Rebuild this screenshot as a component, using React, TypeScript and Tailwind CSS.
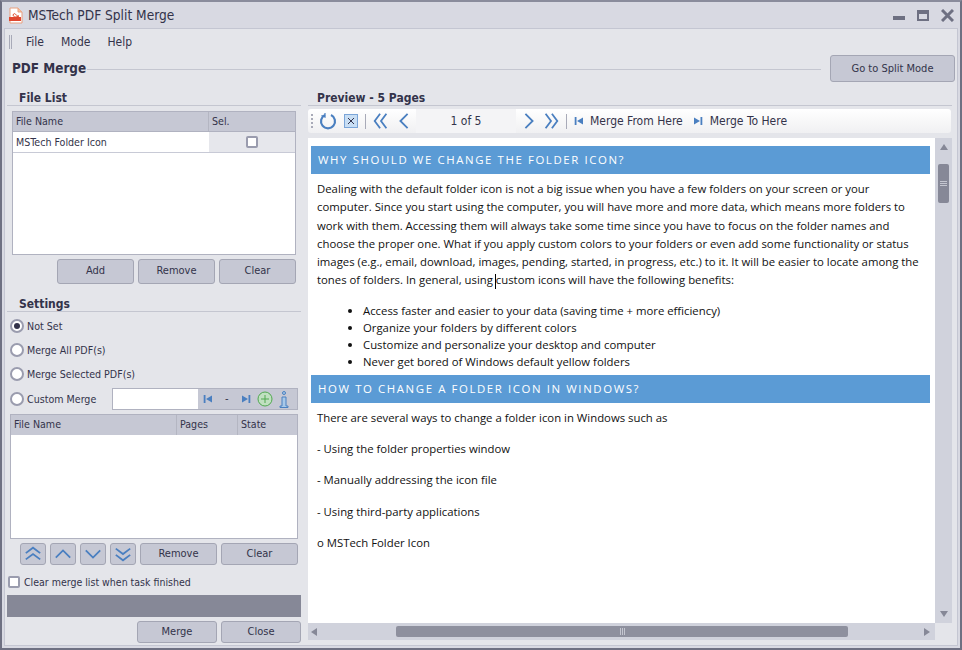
import React from "react";

const UI = "font-['DejaVu_Sans',sans-serif] [font-stretch:condensed]";
const btn = "flex shrink-0 items-center justify-center rounded-[3px] border border-[#a4a6b4] bg-[#c6c8d4] text-[11px] text-[#33334a]";

function Section({ title, pad }: { title: string; pad: string }) {
  return (
    <div className={"h-[19px] shrink-0 border-b border-[#c4c6d0] pt-[3px] text-[12px] font-bold leading-[16px] text-[#33334a] " + pad}>
      {title}
    </div>
  );
}

function Radio({ label, checked, className }: { label: string; checked?: boolean; className?: string }) {
  return (
    <div className={"flex h-[14px] shrink-0 items-center gap-[3px] pl-[3px] " + (className ?? "")}>
      <span className="flex h-[14px] w-[14px] items-center justify-center rounded-full border-2 border-[#9a9cae] bg-white">
        {checked && <span className="h-[6px] w-[6px] rounded-full bg-[#33334a]" />}
      </span>
      <span className="h-[14px] text-[10.6px] leading-[15px] text-[#33334a]">{label}</span>
    </div>
  );
}

function Chev({ dir, size = 20, color = "#4a7fc0", double }: { dir: "l" | "r" | "u" | "d"; size?: number; color?: string; double?: boolean }) {
  const rot = { l: 0, r: 180, u: 90, d: 270 }[dir];
  return (
    <svg width={size} height={size} viewBox="0 0 20 20" fill="none" stroke={color} strokeWidth="2">
      <g transform={`rotate(${rot} 10 10)`}>
        {double ? (
          <>
            <path d="M9 2 L3 10 L9 18" />
            <path d="M16 2 L10 10 L16 18" />
          </>
        ) : (
          <path d="M14 2 L6 10 L14 18" />
        )}
      </g>
    </svg>
  );
}

function SkipIcon({ end }: { end?: boolean }) {
  return (
    <svg width="10" height="10" viewBox="0 0 10 10" fill="#4a7fc0">
      {end ? (
        <>
          <path d="M1 1.5 L7 5 L1 8.5 Z" />
          <rect x="7.5" y="1" width="1.8" height="8" />
        </>
      ) : (
        <>
          <path d="M9 1.5 L3 5 L9 8.5 Z" />
          <rect x="0.7" y="1" width="1.8" height="8" />
        </>
      )}
    </svg>
  );
}

function ArrowBtn({ children }: { children: React.ReactNode }) {
  return <div className={btn + " h-[22px] w-[26px]"}>{children}</div>;
}

function Heading({ children }: { children: string }) {
  return (
    <div className="flex h-[28px] items-center bg-[#5b9bd5] pl-[7px] text-[11.4px] tracking-[1.6px] text-white">{children}</div>
  );
}

export default function App() {
  return (
    <div className={"flex h-[650px] w-[962px] flex-col overflow-hidden border-2 border-[#6e7082] border-t-[#8a8c9c] bg-[#d8d9e2] " + UI}>
      {/* Title bar */}
      <div className="flex h-[26px] shrink-0 items-center pl-[7px] pr-[5px]">
        <svg width="14" height="17" viewBox="0 0 14 17" className="mr-[5px]">
          <path d="M1 1 H9 L13 5 V16 H1 Z" fill="#fff" stroke="#e8a080" />
          <path d="M9 1 V5 H13" fill="#f4c0a0" stroke="#e8a080" />
          <path d="M4 8 C6 4 7 10 10 9 C7 10 5 11 4 8Z" fill="none" stroke="#e05030" />
          <rect x="0" y="10" width="12" height="4" fill="#e04830" />
        </svg>
        <span className="text-[13.6px] text-[#33334a]">MSTech PDF Split Merge</span>
        <div className="ml-auto flex items-center gap-[12px] pr-[1px]">
          <span className="mt-[5px] h-[4px] w-[12px] bg-[#6e7082]" />
          <span className="h-[11px] w-[12px] border-2 border-t-[4px] border-[#6e7082]" />
          <svg width="13" height="13" viewBox="0 0 13 13" stroke="#6e7082" strokeWidth="3">
            <path d="M1 1 L12 12 M12 1 L1 12" />
          </svg>
        </div>
      </div>

      {/* Client */}
      <div className="mx-[2px] mb-[2px] flex min-h-0 flex-1 flex-col border border-[#c4c6d2] bg-[#e4e5ea] px-[2px] pb-[2px]">
        {/* Menu */}
        <div className="flex h-[26px] shrink-0 items-center pl-[2px] text-[12px] text-[#33334a]">
          <span className="mr-[14px] h-[14px] w-[3px] border-x border-[#a8aab8]" />
          <span className="mr-[17px]">File</span>
          <span className="mr-[17px]">Mode</span>
          <span>Help</span>
        </div>

        {/* Page header */}
        <div className="-mt-[1px] flex h-[29px] shrink-0 items-center pl-[5px]">
          <span className="pt-[2px] text-[13.4px] font-bold text-[#33334a]">PDF Merge</span>
          <span className="ml-[1px] mr-[9px] mt-[2px] h-[1px] flex-1 bg-[#c4c6d0]" />
          <div className={btn + " h-[27px] w-[125px] pt-[2px]"}>Go to Split Mode</div>
        </div>

        {/* Body */}
        <div className="mt-[4px] flex min-h-0 flex-1 gap-[7px]">
          {/* Left */}
          <div className="flex w-[294px] shrink-0 flex-col">
            <Section title="File List" pad="pl-[12px]" />
            <div className="mx-[5px] mt-[5px] flex h-[144px] shrink-0 flex-col border border-[#b0b2c0] bg-white text-[10.6px] text-[#33334a]">
              <div className="flex h-[20px] border-b border-[#b0b2c0] bg-[#c6c8d4] leading-[19px]">
                <span className="w-[196px] border-r border-[#b4b6c2] pl-[3px]">File Name</span>
                <span className="pl-[3px]">Sel.</span>
              </div>
              <div className="flex h-[21px] border-b border-[#c8cad6] leading-[20px]">
                <span className="w-[196px] pl-[3px]">MSTech Folder Icon</span>
                <span className="flex flex-1 items-center justify-center bg-[#e6e7ec]">
                  <span className="h-[12px] w-[12px] rounded-[2px] border-2 border-[#9a9cae] bg-white" />
                </span>
              </div>
            </div>
            <div className="mr-[5px] mt-[4px] flex justify-end gap-[4px]">
              <div className={btn + " h-[25px] w-[77px]"}>Add</div>
              <div className={btn + " h-[25px] w-[77px]"}>Remove</div>
              <div className={btn + " h-[25px] w-[77px]"}>Clear</div>
            </div>

            <div className="mt-[9px]">
              <Section title="Settings" pad="pl-[12px]" />
            </div>
            <Radio label="Not Set" checked className="mt-[7px]" />
            <Radio label="Merge All PDF(s)" className="mt-[10px]" />
            <Radio label="Merge Selected PDF(s)" className="mt-[10px]" />
            <div className="mt-[7px] flex h-[22px] shrink-0 items-center">
              <Radio label="Custom Merge" />
              <div className="ml-auto mr-[3px] flex h-[22px] w-[186px] items-center border border-[#b0b2c0] bg-[#c6c8d4]">
                <span className="h-full w-[85px] bg-white" />
                <span className="ml-[5px]"><SkipIcon /></span>
                <span className="ml-[12px] text-[11px] text-[#33334a]">-</span>
                <span className="ml-[12px]"><SkipIcon end /></span>
                <svg width="16" height="16" viewBox="0 0 16 16" className="ml-[6px]" fill="#c0e0c0" stroke="#50a850">
                  <circle cx="8" cy="8" r="7" />
                  <path d="M8 4 V12 M4 8 H12" />
                </svg>
                <svg width="10" height="17" viewBox="0 0 10 17" className="ml-[6px]" fill="#a8c8e8" stroke="#4a80c0">
                  <circle cx="5" cy="2" r="1.5" />
                  <path d="M3 6 H7 V15 H9 V16.5 H1 V15 H3 Z" />
                </svg>
              </div>
            </div>
            <div className="mx-[3px] mt-[4px] flex h-[125px] shrink-0 flex-col border border-[#b0b2c0] bg-white text-[10.6px] text-[#33334a]">
              <div className="flex h-[20px] bg-[#c6c8d4] leading-[19px]">
                <span className="w-[166px] border-r border-[#b4b6c2] pl-[3px]">File Name</span>
                <span className="w-[61px] border-r border-[#b4b6c2] pl-[3px]">Pages</span>
                <span className="pl-[3px]">State</span>
              </div>
            </div>
            <div className="mr-[3px] mt-[4px] flex gap-[4px] pl-[13px]">
              <ArrowBtn><Chev dir="u" double size={18} /></ArrowBtn>
              <ArrowBtn><Chev dir="u" size={18} /></ArrowBtn>
              <ArrowBtn><Chev dir="d" size={18} /></ArrowBtn>
              <ArrowBtn><Chev dir="d" double size={18} /></ArrowBtn>
              <div className={btn + " h-[22px] w-[77px]"}>Remove</div>
              <div className={btn + " h-[22px] w-[77px]"}>Clear</div>
            </div>
            <div className="mt-[10px] flex h-[14px] shrink-0 items-center gap-[4px] pl-[1px]">
              <span className="h-[12px] w-[12px] rounded-[2px] border-2 border-[#9a9cae] bg-white" />
              <span className="h-[14px] text-[10.5px] leading-[15px] text-[#33334a]">Clear merge list when task finished</span>
            </div>
            <div className="mt-[6px] h-[22px] shrink-0 bg-[#868897]" />
            <div className="mt-[4px] flex justify-end gap-[4px]">
              <div className={btn + " h-[22px] w-[80px]"}>Merge</div>
              <div className={btn + " h-[22px] w-[80px]"}>Close</div>
            </div>
          </div>

          {/* Right */}
          <div className="flex min-w-0 flex-1 flex-col pr-[3px]">
            <Section title="Preview - 5 Pages" pad="pl-[9px]" />
            <div className="mt-[3px] mr-[1px] flex h-[24px] shrink-0 items-center rounded-[3px] bg-[linear-gradient(#ffffff,#f0f0f2)] pl-[3px] text-[12px] text-[#33334a]">
              <span className="mr-[5px] h-[14px] w-[3px] border-l-2 border-dotted border-[#a8aab8]" />
              <svg width="18" height="18" viewBox="0 0 18 18" fill="none" stroke="#4a7fc0" strokeWidth="2.2">
                <path d="M6 3 A7 7 0 1 0 12 3" />
                <path d="M6 1 L6 5 L2.5 3.5" strokeWidth="1.2" />
              </svg>
              <span className="ml-[7px] flex h-[14px] w-[14px] items-center justify-center border border-[#7ba5d8] bg-[#c8def4]">
                <svg width="8" height="8" viewBox="0 0 8 8" stroke="#33334a"><path d="M1 1 L7 7 M7 1 L1 7" /></svg>
              </span>
              <span className="ml-[7px] h-[15px] w-[1px] bg-[#a8aab8]" />
              <span className="ml-[6px]"><Chev dir="l" double size={18} /></span>
              <span className="ml-[5px]"><Chev dir="l" size={18} /></span>
              <span className="ml-[3px] flex h-full w-[100px] items-center justify-center bg-[#f4f4f6]">1 of 5</span>
              <span className="ml-[4px]"><Chev dir="r" size={18} /></span>
              <span className="ml-[4px]"><Chev dir="r" double size={18} /></span>
              <span className="ml-[6px] h-[15px] w-[1px] bg-[#a8aab8]" />
              <span className="ml-[7px]"><SkipIcon /></span>
              <span className="ml-[6px]">Merge From Here</span>
              <span className="ml-[10px]"><SkipIcon end /></span>
              <span className="ml-[7px]">Merge To Here</span>
            </div>

            <div className="mt-[5px] flex min-h-0 flex-1 flex-col">
              <div className="flex min-h-0 flex-1">
                <div className="min-w-0 flex-1 overflow-hidden bg-white pl-[3px] pr-[5px] pt-[8px] font-['Open_Sans',sans-serif] text-[11.35px] text-[#111] [font-stretch:normal]">
                  <Heading>WHY SHOULD WE CHANGE THE FOLDER ICON?</Heading>
                  <p className="mb-[12px] mt-[6px] whitespace-nowrap pl-[6px] leading-[18.3px]">
                    Dealing with the default folder icon is not a big issue when you have a few folders on your screen or your<br />
                    computer. Since you start using the computer, you will have more and more data, which means more folders to<br />
                    work with them. Accessing them will always take some time since you have to focus on the folder names and<br />
                    choose the proper one. What if you apply custom colors to your folders or even add some functionality or status<br />
                    images (e.g., email, download, images, pending, started, in progress, etc.) to it. It will be easier to locate among the<br />
                    tones of folders. In general, using <span className="-ml-[1px] inline-block h-[15px] w-[1px] bg-black align-middle" />custom icons will have the following benefits:
                  </p>
                  <ul className="mb-[5px] list-disc pl-[52px] leading-[17px]">
                    <li>Access faster and easier to your data (saving time + more efficiency)</li>
                    <li>Organize your folders by different colors</li>
                    <li>Customize and personalize your desktop and computer</li>
                    <li>Never get bored of Windows default yellow folders</li>
                  </ul>
                  <Heading>HOW TO CHANGE A FOLDER ICON IN WINDOWS?</Heading>
                  <div className="mt-[6px] flex flex-col gap-[13.3px] pl-[6px] leading-[18px]">
                    <p>There are several ways to change a folder icon in Windows such as</p>
                    <p>- Using the folder properties window</p>
                    <p>- Manually addressing the icon file</p>
                    <p>- Using third-party applications</p>
                    <p>o MSTech Folder Icon</p>
                  </div>
                </div>
                {/* Vertical scrollbar */}
                <div className="flex w-[17px] shrink-0 flex-col items-center bg-[#d0d2dc] pt-[6px]">
                  <span className="h-0 w-0 border-x-[4px] border-b-[6px] border-x-transparent border-b-[#868897]" />
                  <span className="mt-[14px] flex h-[39px] w-[11px] flex-col items-center justify-center gap-[1px] rounded-[2px] bg-[#868897]">
                    <span className="h-[1px] w-[7px] bg-[#c4c6d0]" />
                    <span className="h-[1px] w-[7px] bg-[#c4c6d0]" />
                    <span className="h-[1px] w-[7px] bg-[#c4c6d0]" />
                  </span>
                  <span className="mb-[6px] mt-auto h-0 w-0 border-x-[4px] border-t-[6px] border-x-transparent border-t-[#868897]" />
                </div>
              </div>
              {/* Horizontal scrollbar */}
              <div className="mr-[17px] flex h-[17px] shrink-0 items-center bg-[#d0d2dc] pl-[3px] pr-[5px]">
                <span className="h-0 w-0 border-y-[4px] border-r-[6px] border-y-transparent border-r-[#868897]" />
                <span className="ml-[79px] flex h-[11px] w-[452px] items-center justify-center gap-[1px] rounded-[2px] bg-[#8e909e]">
                  <span className="h-[7px] w-[1px] bg-[#c4c6d0]" />
                  <span className="h-[7px] w-[1px] bg-[#c4c6d0]" />
                  <span className="h-[7px] w-[1px] bg-[#c4c6d0]" />
                </span>
                <span className="ml-auto h-0 w-0 border-y-[4px] border-l-[6px] border-y-transparent border-l-[#868897]" />
              </div>
              <div className="h-[3px] shrink-0" />
            </div>
          </div>
        </div>
      </div>
    </div>
  );
}
